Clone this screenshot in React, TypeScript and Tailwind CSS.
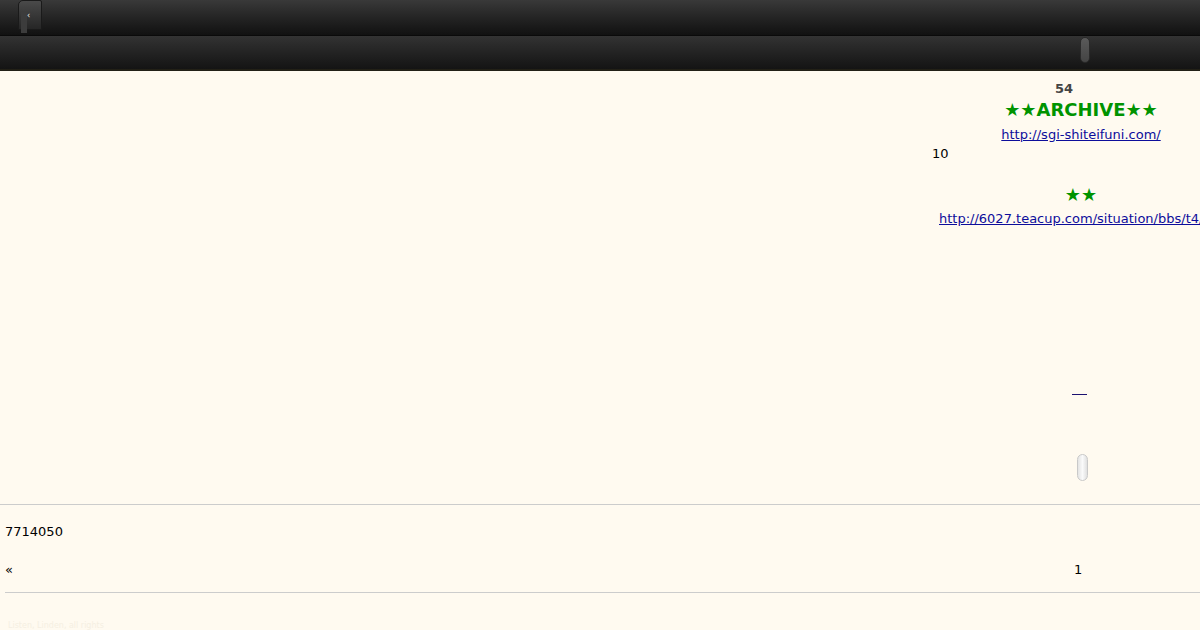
import React from 'react';

const font = { fontFamily: '"DejaVu Sans", Verdana, sans-serif' };

function TopBar() {
  return (
    <div className="h-[36px] bg-gradient-to-b from-[#393939] to-[#111111] border-b border-[#0a0a0a] flex items-end px-[18px]">
      <div className="relative w-[24px] h-[30px] mb-[5px] rounded-tl-[5px] rounded-tr-[2px] bg-gradient-to-b from-[#4a4a4a] to-[#262626] border border-[#1a1a1a]">
        <div className="absolute left-[2px] top-[10px] w-[6px] h-[22px] bg-[#3c3c3c]" />
        <span className="absolute left-[8px] top-[11px] text-[8px] leading-none text-[#eeeeee]">‹</span>
      </div>
    </div>
  );
}

function SubBar() {
  return (
    <div className="h-[35px] bg-gradient-to-b from-[#333333] to-[#141414] border-b-[2px] border-[#222016] flex items-start justify-end pr-[110px]">
      <div className="mt-[1px] w-[10px] h-[26px] rounded-full bg-gradient-to-b from-[#5a5a5a] to-[#444444] border border-[#2a2a2a]" />
    </div>
  );
}

export default function App() {
  return (
    <div className="w-[1200px] h-[630px] overflow-hidden bg-[#fffaf0] text-[13px] text-black" style={font}>
      <TopBar />
      <SubBar />
      <div className="h-[433px] pl-[932px]">
        <div className="w-[298px] flex flex-col">
          <div className="mt-[9px] leading-[17px] text-center font-bold text-[#444444] pr-[34px]">54</div>
          <div className="mt-[2px] leading-[22px] text-center font-bold text-[18px] text-[#009300]">★★ARCHIVE★★</div>
          <a className="mt-[5px] leading-[17px] text-center underline text-[#0d0d9b]">http://sgi-shiteifuni.com/</a>
          <div className="mt-[2px] leading-[17px]">10</div>
          <div className="mt-[22px] leading-[22px] text-center text-[18px] text-[#009300]">★★</div>
          <a className="mt-[4px] pl-[7px] leading-[17px] whitespace-nowrap text-[#0d0d9b] underline">http://6027.teacup.com/situation/bbs/t4/</a>
          <div className="mt-[151px] flex justify-center pr-[4px]">
            <a className="block w-[15px] h-[17px] border-b border-[#1b1070]" />
          </div>
          <div className="mt-[59px] flex justify-center pl-[11px] pr-[8px]">
            <div className="w-[11px] h-[27px] rounded-full bg-gradient-to-r from-[#e4e4e4] via-[#fafafa] to-[#e0e0e0] border border-[#c9c9c9]" />
          </div>
        </div>
      </div>
      <div className="border-t border-[#cccccc]" />
      <div className="pl-[5px]">
        <div className="mt-[18px] leading-[17px]">7714050</div>
        <div className="mt-[21px] flex leading-[17px]">
          <span className="w-[1069px]">«</span>
          <span>1</span>
        </div>
        <div className="mt-[14px] border-t border-[#cccccc]" />
        <div className="mt-[28px] pl-[3px] text-[8px] leading-[10px] text-[#f5efe2]">Listen, Linden, all rights</div>
      </div>
    </div>
  );
}
